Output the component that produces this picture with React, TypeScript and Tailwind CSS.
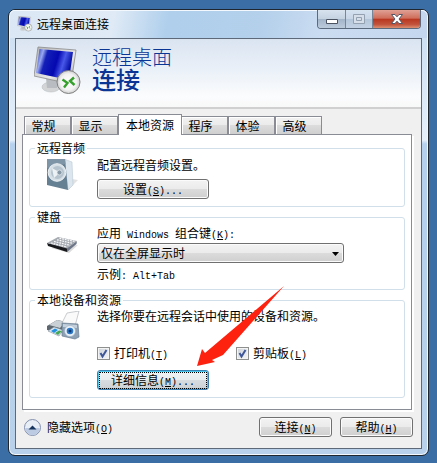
import React from "react";

const bevel =
  "bg-[linear-gradient(#f3f3f3,#ebebeb_48%,#dcdcdc_50%,#cfcfcf)] border border-[#707070] rounded-[3px] shadow-[inset_0_0_0_1px_#fbfbfb]";

function Latin({ children }: { children: React.ReactNode }) {
  return <span className="whitespace-pre font-['Liberation_Mono',monospace] text-[10px] leading-none">{children}</span>;
}

function Key({ k, tail = "" }: { k: string; tail?: string }) {
  return (
    <Latin>
      (<u className="underline underline-offset-1">{k}</u>){tail}
    </Latin>
  );
}

function MonitorIcon({ className }: { className: string }) {
  return (
    <svg viewBox="0 0 48 50" className={className} aria-hidden="true">
      <defs>
        <linearGradient id="scr" x1="0" y1="0" x2="1" y2="0.25">
          <stop offset="0" stopColor="#1226a8" />
          <stop offset="0.2" stopColor="#98a8f0" />
          <stop offset="0.32" stopColor="#1420b8" />
          <stop offset="0.62" stopColor="#0408b0" />
          <stop offset="0.8" stopColor="#4858e8" />
          <stop offset="1" stopColor="#0610a8" />
        </linearGradient>
        <linearGradient id="bez" x1="0" y1="0" x2="1" y2="1">
          <stop offset="0" stopColor="#b4b4b4" />
          <stop offset="0.6" stopColor="#e8e8e8" />
          <stop offset="1" stopColor="#999" />
        </linearGradient>
        <radialGradient id="badge">
          <stop offset="0" stopColor="#fff" />
          <stop offset="0.7" stopColor="#f2f2f2" />
          <stop offset="1" stopColor="#cfcfcf" />
        </radialGradient>
      </defs>
      <ellipse cx="17" cy="41" rx="9" ry="5" fill="#d2d4d6" stroke="#b5b8bb" strokeWidth="0.5" />
      <path d="M12 32 24 35 23 42H13Z" fill="#b9bcc0" />
      <path d="M4 1 42 4 37 38 0 30Z" fill="url(#bez)" stroke="#8a8a8a" strokeWidth="0.8" />
      <path d="M5.500 3 39 6 35 34 2 27Z" fill="url(#scr)" />
      <circle cx="34.500" cy="36" r="11.500" fill="url(#badge)" stroke="#777" strokeWidth="0.900" />
      <path d="M28.500 33.500 33.500 37 30 41.500M40 31.500 36 35 40.500 39" fill="none" stroke="#35a02c" strokeWidth="2.400" />
    </svg>
  );
}

function SpeakerIcon() {
  return (
    <svg viewBox="0 0 32 32" className="h-8 w-8" aria-hidden="true">
      <path d="M22 30 31 21 25 20Z" fill="#e2e2e2" />
      <path d="M17 0 25 3 26 26 21 31Z" fill="#dbe6ee" stroke="#b3c3cf" strokeWidth="0.500" />
      <path d="M0 0H18L21 31 0 26Z" fill="#657f93" />
      <path d="M0 0H18L18.500 5 0 9Z" fill="#7d95a7" />
      <circle cx="10" cy="13.500" r="8.800" fill="#d5dfe6" stroke="#f0f4f7" />
      <circle cx="10.500" cy="13.500" r="6.500" fill="#b5c3ce" />
      <path d="M5 9 13 13.500 7 19Z" fill="#edf2f5" />
      <circle cx="12.500" cy="13.500" r="2.500" fill="#8798a6" stroke="#dfe7ec" strokeWidth="0.800" />
    </svg>
  );
}

function KeyboardIcon() {
  return (
    <svg viewBox="0 0 32 18" className="h-[18px] w-8" aria-hidden="true">
      <path d="M4 12 22 17 31 9Z" fill="#dcdcdc" />
      <path d="M0 7 1 10 20 16 22 12Z" fill="#17191c" />
      <path d="M20 12 30 5 29.500 8 20 16Z" fill="#6c7688" />
      <path d="M0 7 11 1 30 5 20 12.500Z" fill="#a6abb2" />
      <path d="M4 7 20 11M7 5.500 23 9.300M10 3.800 25.500 7.300M12.500 2.300 28 5.500" stroke="#fafafa" strokeWidth="1.200" strokeDasharray="1.800 0.900" />
    </svg>
  );
}

function DevicesIcon() {
  return (
    <svg viewBox="0 0 34 30" className="h-[30px] w-[34px]" aria-hidden="true">
      <path d="M0 15 10 9 20 11 17 22 0 19Z" fill="#5d6770" />
      <path d="M2 14 10 9 18 11 13 17Z" fill="#c9d0d6" />
      <path d="M15 12 20 2 32 0 28 15Z" fill="#fafafa" stroke="#b2b6ba" strokeWidth="0.700" />
      <path d="M1 20 7 16 16 19 12 25Z" fill="#dceaf5" stroke="#7f8b95" strokeWidth="0.600" />
      <path d="M4 20 8 17.500 11 19 7 22Z" fill="#2390dd" />
      <path d="M8 22 12 19.500 15 20 11 24Z" fill="#48a858" />
      <path d="M15 12 31 13 32 26 28 28 15 25Z" fill="#8ea1b4" stroke="#687c91" strokeWidth="0.700" />
      <path d="M16 13 30 14V17L16 16Z" fill="#c4d1dd" />
      <circle cx="23" cy="20" r="5.500" fill="#e9f1f8" stroke="#9aacbd" strokeWidth="0.600" />
      <circle cx="23" cy="20" r="3.300" fill="#2d78c8" />
      <circle cx="23" cy="20" r="1.500" fill="#0c3974" />
    </svg>
  );
}

function Group({ title, icon, children }: { title: string; icon: React.ReactNode; children: React.ReactNode }) {
  return (
    <fieldset className="min-w-0 rounded-[3px] border border-[#d0dfe9] pb-[7px]">
      <legend className="ml-[5px] px-[2px] leading-[14px]">{title}</legend>
      <div className="flex">
        <div className="w-[67px] shrink-0 pt-1 pl-[17px]">{icon}</div>
        <div className="min-w-0 flex-1 pt-px">{children}</div>
      </div>
    </fieldset>
  );
}

function Check({ label, k }: { label: string; k: string }) {
  return (
    <label className="flex items-center gap-1">
      <span className="relative flex h-[13px] w-[13px]">
        <input
          type="checkbox"
          defaultChecked
          className="peer h-[13px] w-[13px] appearance-none border border-[#8e8f8f] bg-[linear-gradient(135deg,#cdd3da,#f6f6f6)] shadow-[inset_0_0_0_1px_#f4f4f4]"
        />
        <svg viewBox="0 0 13 13" className="pointer-events-none absolute inset-0 hidden peer-checked:block" aria-hidden="true">
          <path d="M3.500 6 5.500 9.500 9.500 3" fill="none" stroke="#3f5799" strokeWidth="2" />
        </svg>
      </span>
      <span>
        {label}
        <Key k={k} />
      </span>
    </label>
  );
}

const tabs = ["常规", "显示", "本地资源", "程序", "体验", "高级"];

export default function App() {
  return (
    <main className="min-h-screen bg-[#3a6ea5] px-2 pt-[9px] pb-2 font-['Noto_Sans_CJK_SC',sans-serif] text-xs leading-4 text-black">
      <section className="relative rounded-[7px] border border-[#20262e] bg-[linear-gradient(#c9dbef,#cfe0f3_28px,#e6f0fb_130px,#b5d1ee_134px,#b9d1ea)] px-[6px] pb-[6px] shadow-[inset_0_0_0_1px_#f2f8fe]">
        <header className="-mx-[5px] flex h-7 items-start rounded-t-[5px] bg-[linear-gradient(100deg,#dbe7f4,#dfeaf6_25%,#afcfec_38%,#b4d0eb_60%,#cbdcf1_75%,#c4d7ee)] pl-[7px] shadow-[inset_0_1px_0_#f2f8fe]">
          <MonitorIcon className="mt-[6px] h-4 w-4" />
          <h1 className="mt-[6px] ml-[4px] flex-1">远程桌面连接</h1>
          <div className="mr-[6px] flex h-[19px] overflow-hidden rounded-b-[4px] border border-t-0 border-[#5b6b7d]">
            <button aria-label="最小化" className="grid w-7 place-items-center border-r border-[#77879a] bg-[linear-gradient(#d8e3ef,#c5d2e0_48%,#a3b4c8_50%,#bccbdc)] pt-1">
              <svg viewBox="0 0 12 5" className="h-[5px] w-3"><path d="M0.500 0.500H11.500V4.500H0.500Z" fill="#fff" stroke="#4b5361" /></svg>
            </button>
            <button aria-label="最大化" disabled className="grid w-[27px] place-items-center border-r border-[#77879a] bg-[linear-gradient(#d5e2f0,#c8d6e6_48%,#b3c5d9_50%,#c3d3e4)]">
              <svg viewBox="0 0 12 10" className="h-[10px] w-3"><path d="M0.500 0.500H11.500V9.500H0.500ZM3.500 3.500H8.500V6.500H3.500Z" fill="#d6dfe9" stroke="#93a1b1" /></svg>
            </button>
            <button aria-label="关闭" className="grid w-[47px] place-items-center bg-[linear-gradient(#dfa194,#cf6d5b_46%,#b8361f_50%,#c2523b_80%,#dc8f72)]">
              <svg viewBox="0 0 12 10" className="h-[10px] w-3"><path d="M0.500 0.500H4L6 2.800 8 0.500H11.500L8 5 11.500 9.500H8L6 7.200 4 9.500H0.500L4 5Z" fill="#fff" stroke="#535666" /></svg>
            </button>
          </div>
        </header>

        <div className="border border-[#5d6978] bg-[#f0f0f0]">
          <div className="flex h-[70px] items-start border-b-2 border-[#d0d0d0] bg-[linear-gradient(#dae4f1,#eaf0f8_45%,#fbfcfd_85%,#f8f8f8)] pt-[7px] pl-[18px]">
            <MonitorIcon className="h-[50px] w-12" />
            <p className="ml-[10px] text-[#0a3595]">
              <span className="block text-[20px] leading-[22px] font-light">远程桌面</span>
              <strong className="block text-2xl leading-[22px] font-medium">连接</strong>
            </p>
          </div>

          <div className="px-[6px]">
            <div role="tablist" className="flex h-[25px] items-end pt-[5px] pl-[2px]">
              {tabs.map((t) =>
                t === "本地资源" ? (
                  <button key={t} role="tab" aria-selected="true" className="relative z-10 -mr-px -mb-px h-[21px] w-16 border border-b-0 border-[#898c95] bg-white">
                    {t}
                  </button>
                ) : (
                  <button key={t} role="tab" aria-selected="false" className="h-[18px] w-[47px] border border-b-0 border-[#898c95] bg-[linear-gradient(#f2f2f2,#ebebeb_48%,#dcdcdc_50%,#cfcfcf)] pr-2 leading-[17px] shadow-[inset_1px_1px_0_#fff]">
                    {t}
                  </button>
                ),
              )}
            </div>

            <div role="tabpanel" className="mr-[3px] flex flex-col gap-[3px] border border-[#898c95] bg-white px-[6px] pt-[6px] pb-[11px] shadow-[2px_2px_0_#fff]">
              <Group title="远程音频" icon={<SpeakerIcon />}>
                <p className="pt-px">配置远程音频设置。</p>
                <button className={`${bevel} mt-[6px] block h-5 w-28`}>
                  设置<Key k="S" tail="..." />
                </button>
              </Group>
              <Group title="键盘" icon={<div className="pt-2"><KeyboardIcon /></div>}>
                <label htmlFor="combo" className="block">
                  应用<Latin> Windows </Latin>组合键<Key k="K" tail=":" />
                </label>
                <div className="relative mt-[2px] w-[247px] max-w-full">
                  <select id="combo" className={`${bevel} block h-5 w-full appearance-none pl-[3px] leading-4`}>
                    <option>仅在全屏显示时</option>
                  </select>
                  <svg viewBox="0 0 7 4" className="pointer-events-none absolute top-[9px] right-[5px] h-1 w-[7px]" aria-hidden="true">
                    <path d="M0 0H7L3.500 4Z" />
                  </svg>
                </div>
                <p className="mt-[3px]">示例<Latin>: Alt+Tab</Latin></p>
              </Group>
              <Group title="本地设备和资源" icon={<DevicesIcon />}>
                <p className="whitespace-nowrap">选择你要在远程会话中使用的设备和资源。</p>
                <div className="mt-[21px] grid grid-cols-[139px_1fr]">
                  <Check label="打印机" k="T" />
                  <Check label="剪贴板" k="L" />
                </div>
                <div className="relative mt-[9px]">
                  <button className="block h-5 w-28 rounded-[3px] border border-[#3c7fb1] bg-[linear-gradient(#f0f3f5,#e8ecee_48%,#d8dde1_50%,#ccd2d6)] p-px shadow-[inset_0_0_0_1px_#4cc8ee]">
                    <span className="block border border-dotted border-black leading-[14px]">
                      详细信息<Key k="M" tail="..." />
                    </span>
                  </button>
                  <svg viewBox="0 0 87 80" className="pointer-events-none absolute -top-[84px] left-[100px] h-20 w-[87px]" aria-hidden="true">
                    <path d="M0 80 5 63 8 67 87 0 26 69 15 74 18 76Z" fill="#fd2210" />
                  </svg>
                </div>
              </Group>
            </div>

            <footer className="flex items-center pt-[7px] pr-[2px] pb-[11px] pl-[2px]">
              <button className="flex items-center gap-[6px]">
                <svg viewBox="0 0 17 17" className="h-[17px] w-[17px]" aria-hidden="true">
                  <circle cx="8.500" cy="8.500" r="8" fill="#e8eef6" stroke="#8290ae" />
                  <path d="M1.500 9a7 7 0 0 0 14 0Z" fill="#bccbe2" />
                  <path d="M4.500 10.500 8.500 6.500 12.500 10.500Z" fill="#17365f" />
                </svg>
                <span>隐藏选项<Key k="O" /></span>
              </button>
              <div className="ml-auto flex gap-2">
                <button className={`${bevel} h-5 w-[73px]`}>连接<Key k="N" /></button>
                <button className={`${bevel} h-5 w-[73px]`}>帮助<Key k="H" /></button>
              </div>
            </footer>
          </div>
        </div>
      </section>
    </main>
  );
}
